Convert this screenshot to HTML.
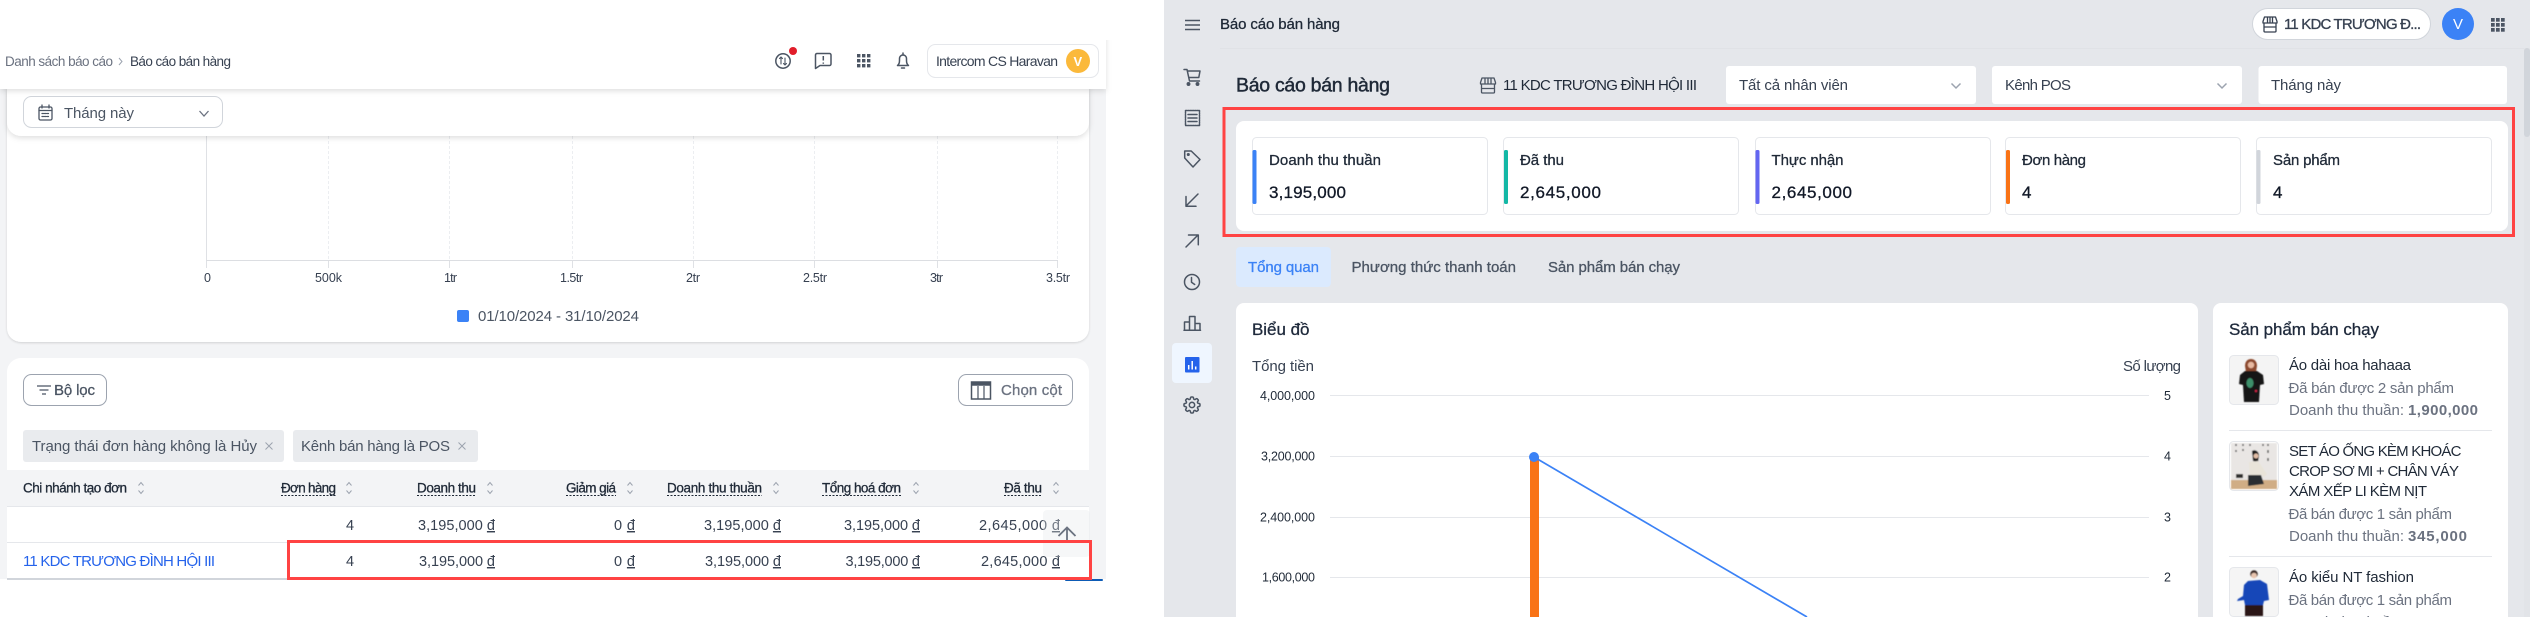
<!DOCTYPE html>
<html lang="vi"><head><meta charset="utf-8"><title>Báo cáo bán hàng</title>
<style>
html,body{margin:0;padding:0;background:#fff;width:2530px;height:617px;overflow:hidden}
svg{display:block}
text{font-family:"Liberation Sans","Noto Sans CJK SC",sans-serif;font-size:15px}
.m{stroke-width:.3px}
.v{font-size:14.5px}
.u{text-decoration:underline}
.ic{fill:none;stroke:#4b5563;stroke-width:1.5;stroke-linecap:round;stroke-linejoin:round}
</style></head><body>
<svg xmlns="http://www.w3.org/2000/svg" width="2530" height="617" viewBox="0 0 2530 617">
<defs>
<filter id="sh" x="-5%" y="-30%" width="110%" height="180%"><feDropShadow dx="0" dy="2" stdDeviation="3" flood-color="#000" flood-opacity=".13"/></filter>
<filter id="sh2" x="-5%" y="-30%" width="110%" height="180%"><feDropShadow dx="0" dy="1" stdDeviation="1" flood-color="#000" flood-opacity=".14"/></filter>
<filter id="bl" x="-10%" y="-10%" width="120%" height="120%"><feGaussianBlur stdDeviation=".6"/></filter>
<g id="sort" fill="none" stroke="#9ca3af" stroke-width="1"><path d="M-2.5-2.5 0-5.5 2.5-2.5M-2.5 2.5 0 5.5 2.5 2.5"/></g>
</defs>

<!-- LEFT PANEL -->
<rect x="0" y="89" width="1106" height="490" fill="#f3f4f6"/>
<rect x="7" y="80" width="1082" height="262" rx="14" fill="#fff" filter="url(#sh2)"/>
<g stroke="#eceef1" stroke-width="1" stroke-dasharray="3 2">
<path d="M328.5 136V260M449.5 136V260M572.5 136V260M693.5 136V260M814.5 136V260M937.5 136V260M1057.5 136V260"/>
</g>
<path d="M206.5 136V268M328.5 260v8M449.5 260v8M572.5 260v8M693.5 260v8M814.5 260v8M937.5 260v8M1057.5 260v8" stroke="#dfe1e5" fill="none"/>
<path d="M206 260.5H1058" stroke="#dcdee2"/>
<g fill="#374151">
<text x="204" y="282" style="font-size:12.5px" textLength="6">0</text>
<text x="315" y="282" style="font-size:12.5px" textLength="27">500k</text>
<text x="444" y="282" style="font-size:12.5px" textLength="13">1tr</text>
<text x="560" y="282" style="font-size:12.5px" textLength="23">1.5tr</text>
<text x="686" y="282" style="font-size:12.5px" textLength="14">2tr</text>
<text x="803" y="282" style="font-size:12.5px" textLength="24">2.5tr</text>
<text x="930" y="282" style="font-size:12.5px" textLength="13">3tr</text>
<text x="1046" y="282" style="font-size:12.5px" textLength="24">3.5tr</text>
</g>
<rect x="457" y="310" width="12" height="12" rx="2" fill="#3b82f6"/>
<text x="478" y="321" fill="#4b5563" textLength="161">01/10/2024 - 31/10/2024</text>

<!-- sticky filter card -->
<rect x="7" y="70" width="1082" height="66" rx="14" fill="#fff" filter="url(#sh)"/>
<rect x="23.5" y="96.5" width="199" height="31" rx="8" fill="#fff" stroke="#d1d5db"/>
<g class="ic" style="stroke-width:1.3"><rect x="39" y="107" width="13" height="13" rx="1.5"/><path d="M39 110.5h13M42 105v3M49 105v3"/><path d="M42 113.5h7M42 116.5h7" stroke-dasharray="1.5 1"/></g>
<text x="64" y="118" fill="#4b5563" textLength="70">Tháng này</text>
<path d="M199.5 111l4.500 5 4.500-5" fill="none" stroke="#6b7280" stroke-width="1.3"/>

<!-- top header -->
<rect x="0" y="0" width="1106" height="89" fill="#fff" filter="url(#sh)"/>
<rect x="0" y="0" width="1164" height="40" fill="#fff"/>
<text x="5" y="66" fill="#6b7280" style="font-size:13.5px" textLength="108">Danh sách báo cáo</text>
<path d="M119 58l3 3.5-3 3.5" fill="none" stroke="#9ca3af"/>
<text x="130" y="66" fill="#374151" style="font-size:13.5px" textLength="101">Báo cáo bán hàng</text>
<g class="ic"><circle cx="783" cy="61" r="7.2"/><path d="M781 57v7M779.5 58.5 781 57l1.5 1.5M785 65v-7M783.5 63.5 785 65l1.5-1.5" style="stroke-width:1.1"/></g>
<circle cx="793" cy="51" r="4" fill="#e11d2a"/>
<path class="ic" d="M815.5 55a1.5 1.5 0 0 1 1.5-1.5h12.5a1.5 1.5 0 0 1 1.5 1.5v9a1.500 1.500 0 0 1-1.5 1.5h-9.500l-4.500 3z"/>
<path d="M823.3 56v4.5M823.3 62.5v1.3" stroke="#4b5563" stroke-width="1.5"/>
<g fill="#4b5563"><rect x="857" y="54" width="3.4" height="3.4"/><rect x="862" y="54" width="3.4" height="3.4"/><rect x="867" y="54" width="3.4" height="3.4"/><rect x="857" y="59" width="3.4" height="3.4"/><rect x="862" y="59" width="3.4" height="3.4"/><rect x="867" y="59" width="3.4" height="3.4"/><rect x="857" y="64" width="3.4" height="3.4"/><rect x="862" y="64" width="3.4" height="3.4"/><rect x="867" y="64" width="3.4" height="3.4"/></g>
<path class="ic" d="M897.5 65.5c1.5-1 2-2.5 2-5v-2a3.500 3.500 0 0 1 7 0v2c0 2.500.5 4 2 5zM903 53v1.5M901.5 68h3"/>
<rect x="927.5" y="44.5" width="171" height="33" rx="8" fill="#fff" stroke="#e5e7eb"/>
<text x="936" y="66" fill="#374151" style="font-size:14px" textLength="122">Intercom CS Haravan</text>
<circle cx="1078" cy="61" r="12" fill="#fbb93b"/>
<text x="1073.5" y="66" fill="#fff" style="font-size:13px;font-weight:bold">V</text>

<!-- table card -->
<path d="M7 579V372a14 14 0 0 1 14-14H1075a14 14 0 0 1 14 14V579Z" fill="#fff"/>
<rect x="23.5" y="374.5" width="83" height="31" rx="8" fill="#fff" stroke="#9ca3af"/>
<path d="M37 386h14M39.5 390h9M42 394h4" stroke="#4b5563" stroke-width="1.2"/>
<text x="54" y="395" fill="#4b5563" class="m" stroke="#4b5563" textLength="41">Bộ lọc</text>
<rect x="958.5" y="374.5" width="114" height="31" rx="8" fill="#fff" stroke="#9ca3af"/>
<g fill="none" stroke="#4b5563"><rect x="971.5" y="382" width="19" height="17" stroke-width="1.5"/><path d="M971 384h20" stroke-width="3.5"/><path d="M978 386v13M984 386v13" stroke-width="1.2"/></g>
<text x="1001" y="395" fill="#6b7280" class="m" stroke="#6b7280" textLength="61">Chọn cột</text>
<rect x="23" y="430" width="261" height="32" rx="3" fill="#e9ebee"/>
<rect x="293" y="430" width="185" height="32" rx="3" fill="#e9ebee"/>
<text x="32" y="451" fill="#4b5563" textLength="225">Trạng thái đơn hàng không là Hủy</text>
<path d="M265.5 442.500l7 7M272.5 442.500l-7 7M458.5 442.500l7 7M465.5 442.500l-7 7" stroke="#9ca3af" stroke-width="1"/>
<text x="301" y="451" fill="#4b5563" textLength="149">Kênh bán hàng là POS</text>
<rect x="7" y="470" width="1082" height="36" fill="#f3f4f6"/>
<path d="M7 506.5H1089M7 542.5H1089" stroke="#e5e7eb"/>
<g fill="#1f2937">
<text x="23" y="492.5" style="font-size:13.5px" class="m" stroke="#1f2937" textLength="104">Chi nhánh tạo đơn</text>
<text x="281" y="492.5" style="font-size:13.5px" class="m" stroke="#1f2937" textLength="55">Đơn hàng</text>
<text x="417" y="492.5" style="font-size:13.5px" class="m" stroke="#1f2937" textLength="59">Doanh thu</text>
<text x="566" y="492.5" style="font-size:13.5px" class="m" stroke="#1f2937" textLength="50">Giảm giá</text>
<text x="667" y="492.5" style="font-size:13.5px" class="m" stroke="#1f2937" textLength="95">Doanh thu thuần</text>
<text x="822" y="492.5" style="font-size:13.5px" class="m" stroke="#1f2937" textLength="79">Tổng hoá đơn</text>
<text x="1004" y="492.5" style="font-size:13.5px" class="m" stroke="#1f2937" textLength="38">Đã thu</text>
</g>
<path d="M281 495.5h55M417 495.5h59M566 495.5h50M667 495.5h95M822 495.5h79M1004 495.5h38" stroke="#1f2937" stroke-dasharray="2 1.5" fill="none"/>
<use href="#sort" x="141" y="488"/><use href="#sort" x="349" y="488"/><use href="#sort" x="490" y="488"/><use href="#sort" x="630" y="488"/><use href="#sort" x="776" y="488"/><use href="#sort" x="916" y="488"/><use href="#sort" x="1056" y="488"/>
<g fill="#374151">
<text x="346" y="530" class="v" textLength="8">4</text>
<text x="418" y="530" class="v" textLength="77">3,195,000 <tspan class="u">đ</tspan></text>
<text x="614" y="530" class="v" textLength="21">0 <tspan class="u">đ</tspan></text>
<text x="704" y="530" class="v" textLength="77">3,195,000 <tspan class="u">đ</tspan></text>
<text x="844" y="530" class="v" textLength="76">3,195,000 <tspan class="u">đ</tspan></text>
<text x="979" y="530" class="v" textLength="81">2,645,000 <tspan class="u">đ</tspan></text>
<text x="346" y="566" class="v" textLength="8">4</text>
<text x="419" y="566" class="v" textLength="76">3,195,000 <tspan class="u">đ</tspan></text>
<text x="614" y="566" class="v" textLength="21">0 <tspan class="u">đ</tspan></text>
<text x="705" y="566" class="v" textLength="76">3,195,000 <tspan class="u">đ</tspan></text>
<text x="845.5" y="566" class="v" textLength="74.5">3,195,000 <tspan class="u">đ</tspan></text>
<text x="981" y="566" class="v" textLength="79">2,645,000 <tspan class="u">đ</tspan></text>
</g>
<text x="23" y="566" fill="#2563eb" textLength="192">11 KDC TRƯƠNG ĐÌNH HỘI III</text>
<rect x="1043" y="510" width="47" height="47" rx="4" fill="#e5e7eb" opacity=".35"/>
<path d="M1067 527.5V540M1058.5 536l8.500-8.500 8.500 8.500" fill="none" stroke="#6b7280" stroke-width="1.8"/>
<rect x="7" y="578" width="793" height="2" fill="#d1d5db"/>
<rect x="1065" y="579" width="38" height="2" rx="1" fill="#0d5bb5"/>
<rect x="288.5" y="541.5" width="802" height="37" fill="none" stroke="#ff4343" stroke-width="3"/>

<!-- RIGHT PANEL -->
<rect x="1164" y="0" width="1366" height="617" fill="#e5e7eb"/>
<path d="M1220 48.5H2530" stroke="#e0e2e6"/>
<rect x="2524" y="48" width="6" height="569" fill="#e2e4e8"/>
<rect x="2524" y="48" width="6" height="89" rx="3" fill="#d1d5db"/>
<path d="M1185 20.5h15M1185 25h15M1185 29.5h15" stroke="#4b5563" stroke-width="1.5"/>
<text x="1220" y="29" fill="#1f2937" class="m" stroke="#1f2937" textLength="120">Báo cáo bán hàng</text>
<rect x="2252.5" y="8.5" width="178" height="31" rx="15.5" fill="#fff" stroke="#d1d5db"/>
<g class="ic" style="stroke:#374151;stroke-width:1.3"><path d="M2263 23v-1.5l1.5-4.500h11l1.500 4.500V23M2264 23.5V31a1 1 0 0 0 1 1h10a1 1 0 0 0 1-1v-7.500M2263 23h14M2267.5 17v6M2270 17v6M2272.5 17v6M2264 27h12"/></g>
<text x="2284" y="29" fill="#374151" class="m" stroke="#374151" textLength="137">11 KDC TRƯƠNG Đ...</text>
<circle cx="2458" cy="24" r="16" fill="#3b82f6"/>
<text x="2453" y="29" fill="#fff">V</text>
<g fill="#4b5563"><rect x="2491" y="18" width="3.7" height="3.7"/><rect x="2496" y="18" width="3.7" height="3.7"/><rect x="2501" y="18" width="3.7" height="3.7"/><rect x="2491" y="23" width="3.7" height="3.7"/><rect x="2496" y="23" width="3.7" height="3.7"/><rect x="2501" y="23" width="3.7" height="3.7"/><rect x="2491" y="28" width="3.7" height="3.7"/><rect x="2496" y="28" width="3.7" height="3.7"/><rect x="2501" y="28" width="3.7" height="3.7"/></g>

<!-- sidebar -->
<g class="ic">
<path d="M1184 69.5h3l2.500 11.500h10M1187.7 71H1200l-1.200 6.500h-10"/>
<circle cx="1188.5" cy="84" r="1.2" fill="#4b5563"/><circle cx="1197.5" cy="84" r="1.2" fill="#4b5563"/>
<rect x="1185.5" y="110.5" width="14" height="15" stroke-dasharray="1.5 .8"/>
<path d="M1188 114.5h9M1188 118h9M1188 121.5h9"/>
<path d="M1184.7 151h6.500l8.800 8.500-7 7.500-8.300-9z"/>
<circle cx="1188.3" cy="154.5" r=".8" fill="#4b5563"/>
<path d="M1198 194l-11.500 11.500M1186 196.5v9.800h10"/>
<path d="M1186 247l12-12M1188.5 235h9.800v9.800"/>
<circle cx="1192" cy="282" r="7.5"/><path d="M1191.5 277.5v4.800l3.200 2.200"/>
<path d="M1184.5 330v-8h5v8M1189.5 330v-13.500h5.500V330M1195 323.5h5v6.500M1184 330.3h16.500"/>
</g>
<rect x="1172" y="343" width="40" height="40" rx="4" fill="#eff6ff"/>
<rect x="1185" y="357" width="14.5" height="15.5" rx="1" fill="#2563eb"/>
<path d="M1188.7 365v4.500M1192.2 361v8.500M1195.7 366.5v3" stroke="#fff" stroke-width="1.5"/>
<g transform="translate(1181.3 394.3) scale(.89)" fill="none" stroke="#4b5563" stroke-width="1.7" stroke-linejoin="round"><path d="M10.343 3.940c.09-.542.56-.94 1.110-.94h1.093c.55 0 1.020.398 1.110.94l.149.894c.07.424.384.764.78.93.398.164.855.142 1.205-.108l.737-.527a1.125 1.125 0 011.450.12l.773.774c.39.389.44 1.002.12 1.450l-.527.737c-.25.35-.272.806-.107 1.204.165.397.505.71.93.78l.893.15c.543.09.94.56.94 1.109v1.094c0 .55-.397 1.020-.94 1.110l-.893.149c-.425.07-.765.383-.93.78-.165.398-.143.854.107 1.204l.527.738c.32.447.269 1.060-.12 1.450l-.774.773a1.125 1.125 0 01-1.449.12l-.738-.527c-.35-.25-.806-.272-1.203-.107-.397.165-.71.505-.781.929l-.149.894c-.09.542-.56.94-1.110.94h-1.094c-.55 0-1.019-.398-1.110-.94l-.148-.894c-.071-.424-.384-.764-.781-.93-.398-.164-.854-.142-1.204.108l-.738.527c-.447.32-1.060.269-1.450-.12l-.773-.774a1.125 1.125 0 01-.12-1.450l.527-.737c.25-.35.273-.806.108-1.204-.165-.397-.505-.71-.93-.78l-.894-.15c-.542-.09-.94-.56-.94-1.109v-1.094c0-.55.398-1.020.94-1.110l.894-.149c.424-.07.765-.383.93-.78.165-.398.143-.854-.107-1.204l-.527-.738a1.125 1.125 0 01.12-1.450l.773-.773a1.125 1.125 0 011.450-.12l.737.527c.35.25.807.272 1.204.107.397-.165.71-.505.78-.929l.15-.894z"/><circle cx="12" cy="12" r="3"/></g>

<!-- title row -->
<text x="1236" y="91.5" fill="#1f2937" style="font-size:19.5px;stroke-width:.45px" stroke="#1f2937" textLength="154">Báo cáo bán hàng</text>
<g class="ic" style="stroke:#4b5563;stroke-width:1.3"><path d="M1480.5 84v-1.500l1.500-4.500h12l1.500 4.500V84M1481.5 84.5V92a1 1 0 0 0 1 1h11a1 1 0 0 0 1-1v-7.500M1480.5 84h15M1485 78v6M1488 78v6M1491 78v6M1481.5 88.5h13"/></g>
<text x="1503" y="90" fill="#1f2937" textLength="194">11 KDC TRƯƠNG ĐÌNH HỘI III</text>
<rect x="1726" y="66" width="250" height="38" rx="3" fill="#fff"/>
<text x="1739" y="90" fill="#374151" textLength="109">Tất cả nhân viên</text>
<path d="M1951.5 83.500l4.500 4.500 4.500-4.500" fill="none" stroke="#9ca3af" stroke-width="1.5"/>
<rect x="1992" y="66" width="250" height="38" rx="3" fill="#fff"/>
<text x="2005" y="90" fill="#374151" textLength="66">Kênh POS</text>
<path d="M2217.5 83.500l4.500 4.500 4.500-4.500" fill="none" stroke="#9ca3af" stroke-width="1.5"/>
<rect x="2258.5" y="66" width="248.5" height="38" rx="3" fill="#fff"/>
<text x="2271" y="90" fill="#374151" textLength="70">Tháng này</text>

<!-- stats -->
<rect x="1236" y="121" width="1272" height="110" rx="8" fill="#fff"/>
<g fill="#fff" stroke="#e5e7eb">
<rect x="1252.5" y="137.5" width="235" height="77" rx="4"/>
<rect x="1503.5" y="137.5" width="235" height="77" rx="4"/>
<rect x="1755.5" y="137.5" width="235" height="77" rx="4"/>
<rect x="2005.5" y="137.5" width="235" height="77" rx="4"/>
<rect x="2256.5" y="137.5" width="235" height="77" rx="4"/>
</g>
<rect x="1252.5" y="150" width="4" height="54" rx="1.5" fill="#3b82f6"/>
<rect x="1504" y="150" width="4" height="54" rx="1.5" fill="#14b8a6"/>
<rect x="1755.5" y="150" width="4" height="54" rx="1.5" fill="#6366f1"/>
<rect x="2006" y="150" width="4" height="54" rx="1.5" fill="#f97316"/>
<rect x="2256.5" y="150" width="4" height="54" rx="1.5" fill="#d1d5db"/>
<g fill="#1f2937">
<text x="1269" y="165" class="m" stroke="#1f2937" textLength="112">Doanh thu thuần</text>
<text x="1520" y="165" class="m" stroke="#1f2937" textLength="44">Đã thu</text>
<text x="1771.5" y="165" class="m" stroke="#1f2937" textLength="72">Thực nhận</text>
<text x="2022" y="165" class="m" stroke="#1f2937" textLength="64">Đơn hàng</text>
<text x="2273" y="165" class="m" stroke="#1f2937" textLength="67">Sản phẩm</text>
</g>
<g fill="#111827">
<text x="1269" y="198" style="font-size:17px" class="m" stroke="#111827" textLength="77">3,195,000</text>
<text x="1520" y="198" style="font-size:17px" class="m" stroke="#111827" textLength="81">2,645,000</text>
<text x="1771.5" y="198" style="font-size:17px" class="m" stroke="#111827" textLength="80.5">2,645,000</text>
<text x="2022" y="198" style="font-size:17px" class="m" stroke="#111827" textLength="10">4</text>
<text x="2273" y="198" style="font-size:17px" class="m" stroke="#111827" textLength="10">4</text>
</g>
<rect x="1224" y="108.5" width="1289.5" height="127" fill="none" stroke="#ff4343" stroke-width="3"/>

<!-- tabs -->
<rect x="1236" y="247" width="95" height="40" rx="4" fill="#dbeafe"/>
<text x="1248" y="272" fill="#3b82f6" class="m" stroke="#3b82f6" textLength="71">Tổng quan</text>
<text x="1351.5" y="272" fill="#4b5563" class="m" stroke="#4b5563" textLength="164.5">Phương thức thanh toán</text>
<text x="1548" y="272" fill="#4b5563" class="m" stroke="#4b5563" textLength="132">Sản phẩm bán chạy</text>

<!-- chart card -->
<path d="M1236 630V311a8 8 0 0 1 8-8H2190a8 8 0 0 1 8 8V630Z" fill="#fff"/>
<text x="1252" y="335" fill="#1e293b" style="font-size:17px" class="m" stroke="#1e293b" textLength="57.5">Biểu đồ</text>
<text x="1252" y="371" fill="#374151" textLength="62">Tổng tiền</text>
<text x="2123" y="371" fill="#374151" textLength="58">Số lượng</text>
<path d="M1330 395.5H2149M1330 456.5H2149M1330 517.5H2149M1330 577.5H2149" stroke="#e5e7eb"/>
<g fill="#1f2937">
<text x="1260" y="400" style="font-size:12.5px" textLength="55">4,000,000</text>
<text x="1261" y="460.5" style="font-size:12.5px" textLength="54">3,200,000</text>
<text x="1260" y="521.5" style="font-size:12.5px" textLength="55">2,400,000</text>
<text x="1262" y="581.5" style="font-size:12.5px" textLength="53">1,600,000</text>
<text x="2164" y="400" style="font-size:12.5px">5</text>
<text x="2164" y="460.5" style="font-size:12.5px">4</text>
<text x="2164" y="521.5" style="font-size:12.5px">3</text>
<text x="2164" y="581.5" style="font-size:12.5px">2</text>
</g>
<rect x="1530" y="457" width="9" height="160" fill="#f97316"/>
<path d="M1534 457L1807 617" stroke="#3b82f6" stroke-width="1.7"/>
<circle cx="1534" cy="457" r="5" fill="#3b82f6"/>

<!-- products card -->
<path d="M2213 630V311a8 8 0 0 1 8-8H2500a8 8 0 0 1 8 8V630Z" fill="#fff"/>
<text x="2229" y="335" fill="#1e293b" style="font-size:17px" class="m" stroke="#1e293b" textLength="150">Sản phẩm bán chạy</text>

<rect x="2229.5" y="355.5" width="49" height="49" rx="4" fill="#f4f4f4" stroke="#e5e7eb"/>
<g filter="url(#bl)"><path d="M2246 372l-1-6c0-5 3-7 6-7s6 2 6 7l-1 6z" fill="#8c4a2f"/><circle cx="2251" cy="365" r="3.2" fill="#e8b9a0"/><path d="M2245 371h12l6 4 1 9-4 1-1 17h-15l-1-17-4-1 1-9z" fill="#141414"/><ellipse cx="2250" cy="383" rx="3.500" ry="5" fill="#3d8f6a"/><circle cx="2256" cy="391" r="1.2" fill="#c24"/></g>
<text x="2289" y="370" fill="#1f2937" textLength="122">Áo dài hoa hahaaa</text>
<text x="2288.5" y="393" fill="#6b7280" textLength="165.5">Đã bán được 2 sản phẩm</text>
<text x="2289" y="415" fill="#6b7280" textLength="115">Doanh thu thuần:</text>
<text x="2408" y="415" fill="#6b7280" style="font-weight:bold" textLength="70">1,900,000</text>
<path d="M2229 430.5H2492" stroke="#e5e7eb"/>

<rect x="2229.5" y="441.5" width="49" height="49" rx="4" fill="#fff" stroke="#e5e7eb"/>
<g filter="url(#bl)"><rect x="2231" y="443" width="46" height="46" fill="#e9e6e4"/><rect x="2231" y="480" width="46" height="9" fill="#d0ad85"/><path d="M2236 444v2M2243 444v2M2250 444v2M2263 444v2M2268 444v2M2243 449v2M2236 450v2M2268 450v3M2268 458v3" stroke="#555" stroke-width="1.5"/><path d="M2252 451c3-2 7 0 7 5l-1 6-5-1z" fill="#1a1a1a"/><circle cx="2256" cy="456" r="2.5" fill="#e2bda6"/><path d="M2249 462l9-1 9 13-3 3-4-3v4h-10z" fill="#e9e4d9"/><path d="M2248 475h13l3 9-16 2z" fill="#2a2d33"/><rect x="2236" y="474" width="7" height="4" fill="#333"/></g>
<text x="2289" y="456" fill="#1f2937" textLength="172.5">SET ÁO ỐNG KÈM KHOÁC</text>
<text x="2289" y="476" fill="#1f2937" textLength="170">CROP SƠ MI + CHÂN VÁY</text>
<text x="2289" y="496" fill="#1f2937" textLength="138">XÁM XẾP LI KÈM NỊT</text>
<text x="2288.5" y="519" fill="#6b7280" textLength="163.5">Đã bán được 1 sản phẩm</text>
<text x="2289" y="541" fill="#6b7280" textLength="115">Doanh thu thuần:</text>
<text x="2408" y="541" fill="#6b7280" style="font-weight:bold" textLength="59">345,000</text>
<path d="M2229 556.5H2492" stroke="#e5e7eb"/>

<rect x="2229.5" y="567.5" width="49" height="49" rx="4" fill="#f5f5f5" stroke="#e5e7eb"/>
<g filter="url(#bl)"><circle cx="2254" cy="574" r="3.8" fill="#3a2c28"/><circle cx="2254" cy="575.5" r="2.8" fill="#e8c4ae"/><path d="M2248 581l12-1 7 4 2 16-5 1-1 4h-18l-1-5-7 1 1-2 5-3 1-11z" fill="#1746b8"/><rect x="2245" y="605" width="18" height="11" fill="#2a1712"/></g>
<text x="2289" y="582" fill="#1f2937" textLength="125">Áo kiểu NT fashion</text>
<text x="2288.5" y="605" fill="#6b7280" textLength="163.5">Đã bán được 1 sản phẩm</text>
<text x="2289" y="627" fill="#6b7280" textLength="115">Doanh thu thuần:</text>
</svg>
</body></html>
